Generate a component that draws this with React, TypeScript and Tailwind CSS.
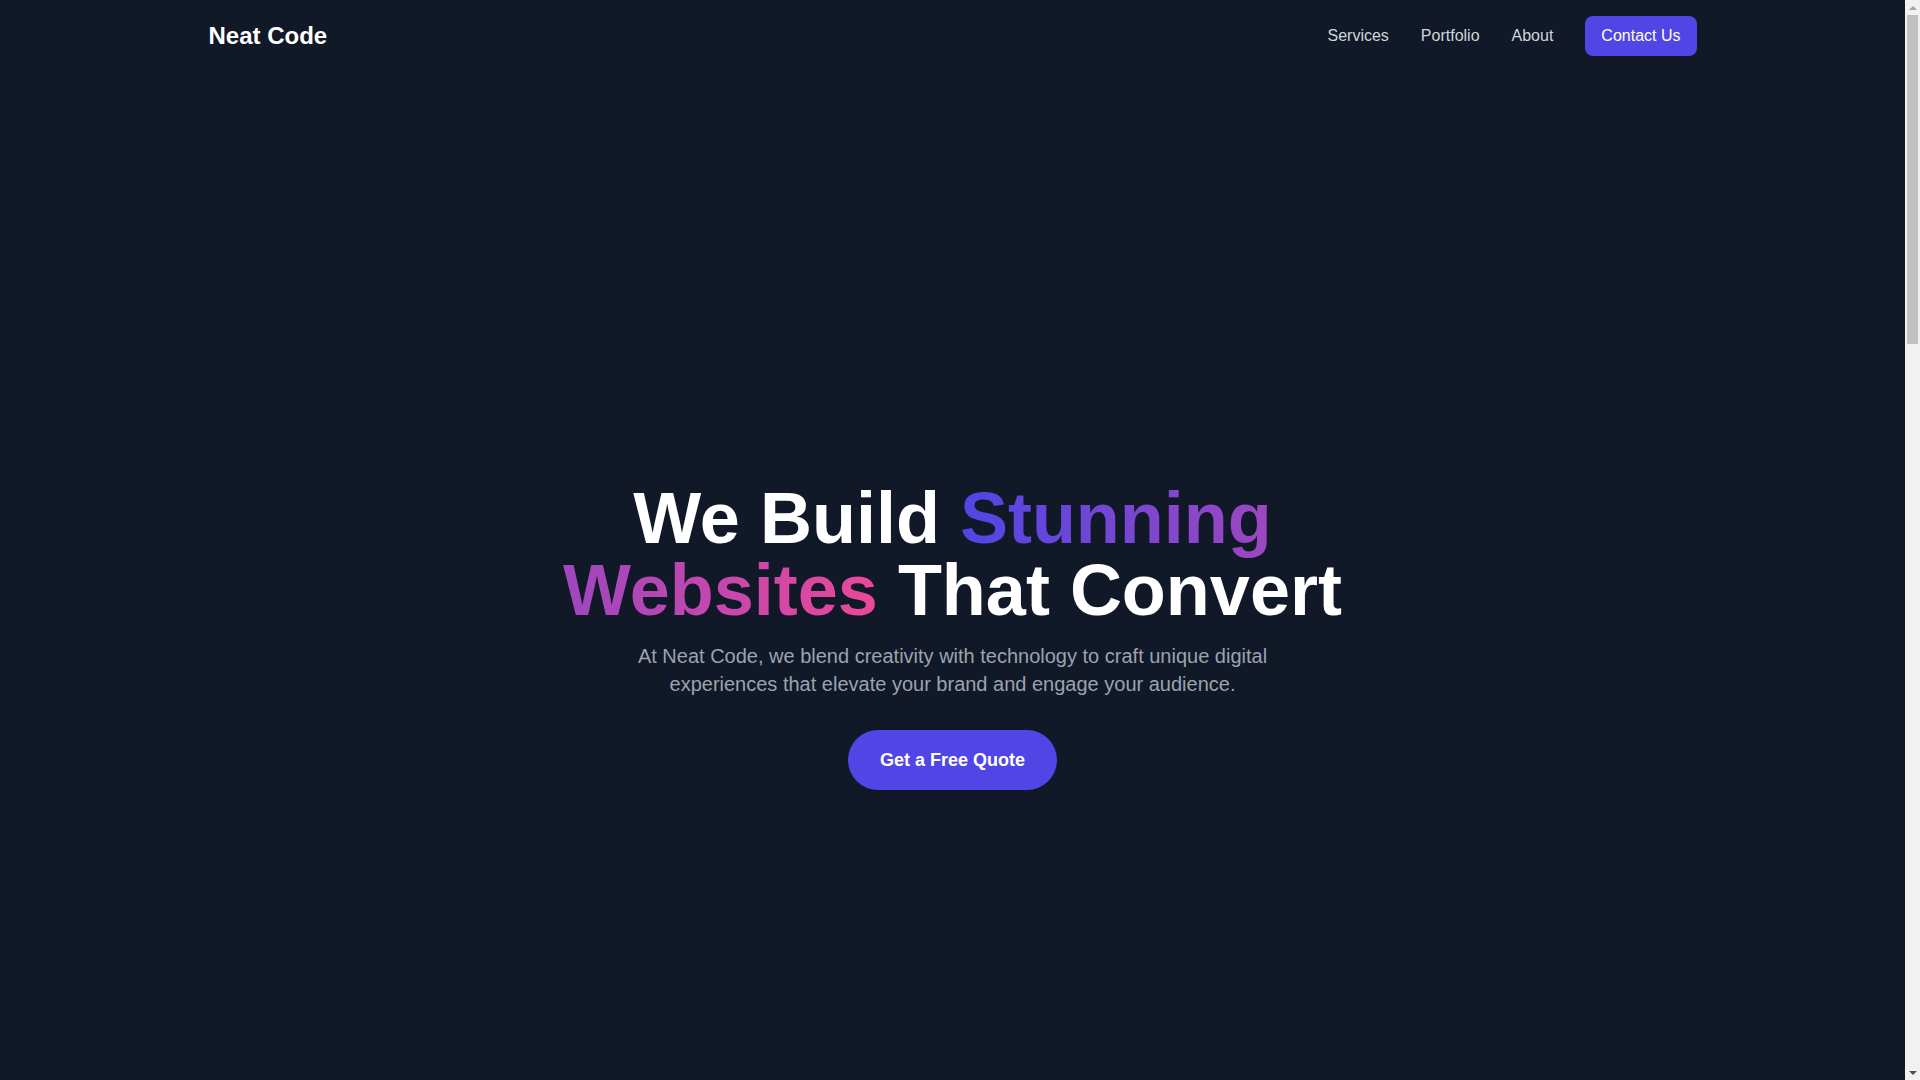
const navLinks = ["Services", "Portfolio", "About"];

const services = [
  {
    title: "Web Design",
    text: "Pixel-perfect interfaces designed around your brand and your users.",
  },
  {
    title: "Web Development",
    text: "Fast, accessible and scalable websites built with modern tooling.",
  },
  {
    title: "SEO & Growth",
    text: "Search-friendly builds and analytics that turn visitors into customers.",
  },
];

const projects = ["Aurora Studio", "Bloom Market", "Northwind Labs", "Pulse Fitness"];

const Nav = () => (
  <nav className="mx-auto flex max-w-[1536px] items-center justify-between px-6 py-4">
    <a href="#" className="text-2xl font-bold text-white">
      Neat Code
    </a>
    <div className="flex items-center gap-8">
      {navLinks.map((link) => (
        <a
          key={link}
          href={`#${link.toLowerCase()}`}
          className="text-base text-[#d1d5db] hover:text-white"
        >
          {link}
        </a>
      ))}
      <a
        href="#contact"
        className="rounded-lg bg-[#4f46e5] px-4 py-2 text-base text-white hover:bg-[#4338ca]"
      >
        Contact Us
      </a>
    </div>
  </nav>
);

const Hero = () => (
  <section className="flex min-h-screen items-center justify-center px-6 pt-12">
    <div className="flex flex-col items-center text-center">
      <h1 className="mb-4 max-w-4xl text-7xl leading-none font-bold text-white">
        We Build{" "}
        <span className="bg-[linear-gradient(to_right,#4f46e5,#ec4899)] bg-clip-text text-transparent">
          Stunning Websites
        </span>{" "}
        That Convert
      </h1>
      <p className="mb-8 max-w-2xl text-xl text-[#9ca3af]">
        At Neat Code, we blend creativity with technology to craft unique
        digital experiences that elevate your brand and engage your audience.
      </p>
      <a
        href="#contact"
        className="rounded-full bg-[#4f46e5] px-8 py-4 text-lg font-semibold text-white hover:bg-[#4338ca]"
      >
        Get a Free Quote
      </a>
    </div>
  </section>
);

const Services = () => (
  <section id="services" className="min-h-[800px] px-6 py-24">
    <div className="mx-auto max-w-6xl">
      <h2 className="mb-12 text-center text-4xl font-bold text-white">
        Our Services
      </h2>
      <div className="grid grid-cols-3 gap-8">
        {services.map((s) => (
          <div key={s.title} className="rounded-xl bg-[#1f2937] p-8">
            <h3 className="mb-3 text-xl font-semibold text-white">{s.title}</h3>
            <p className="text-[#9ca3af]">{s.text}</p>
          </div>
        ))}
      </div>
    </div>
  </section>
);

const Portfolio = () => (
  <section id="portfolio" className="min-h-[800px] px-6 py-24">
    <div className="mx-auto max-w-6xl">
      <h2 className="mb-12 text-center text-4xl font-bold text-white">
        Recent Work
      </h2>
      <div className="grid grid-cols-2 gap-8">
        {projects.map((p) => (
          <div
            key={p}
            className="flex h-56 items-end rounded-xl bg-[#1f2937] p-6 text-lg font-semibold text-white"
          >
            {p}
          </div>
        ))}
      </div>
    </div>
  </section>
);

const About = () => (
  <section id="about" className="min-h-[600px] px-6 py-24">
    <div className="mx-auto max-w-3xl text-center">
      <h2 className="mb-6 text-4xl font-bold text-white">About Neat Code</h2>
      <p className="text-lg text-[#9ca3af]">
        We are a small team of designers and developers who care about clean
        code, thoughtful design and measurable results.
      </p>
    </div>
  </section>
);

// classic browser scrollbar, as seen in the screenshot
const ScrollBar = () => (
  <aside className="sticky top-0 flex h-screen w-[15px] shrink-0 flex-col items-center bg-[#f1f1f1]">
    <div className="flex h-[15px] w-full items-center justify-center">
      <div className="h-0 w-0 border-x-[4px] border-b-[4px] border-x-transparent border-b-[#a3a3a3]" />
    </div>
    <div className="h-[329px] w-[11px] bg-[#c1c1c1]" />
    <div className="flex-1" />
    <div className="flex h-[15px] w-full items-center justify-center">
      <div className="h-0 w-0 border-x-[4px] border-t-[4px] border-x-transparent border-t-[#505050]" />
    </div>
  </aside>
);

export default function App() {
  return (
    <div className="flex bg-[#111827] font-['Liberation_Sans',Arial,sans-serif]">
      <main className="min-w-0 flex-1">
        <Nav />
        <Hero />
        <Services />
        <Portfolio />
        <About />
        <footer className="border-t border-[#1f2937] px-6 py-8 text-center text-sm text-[#6b7280]">
          © 2024 Neat Code. All rights reserved.
        </footer>
      </main>
      <ScrollBar />
    </div>
  );
}
